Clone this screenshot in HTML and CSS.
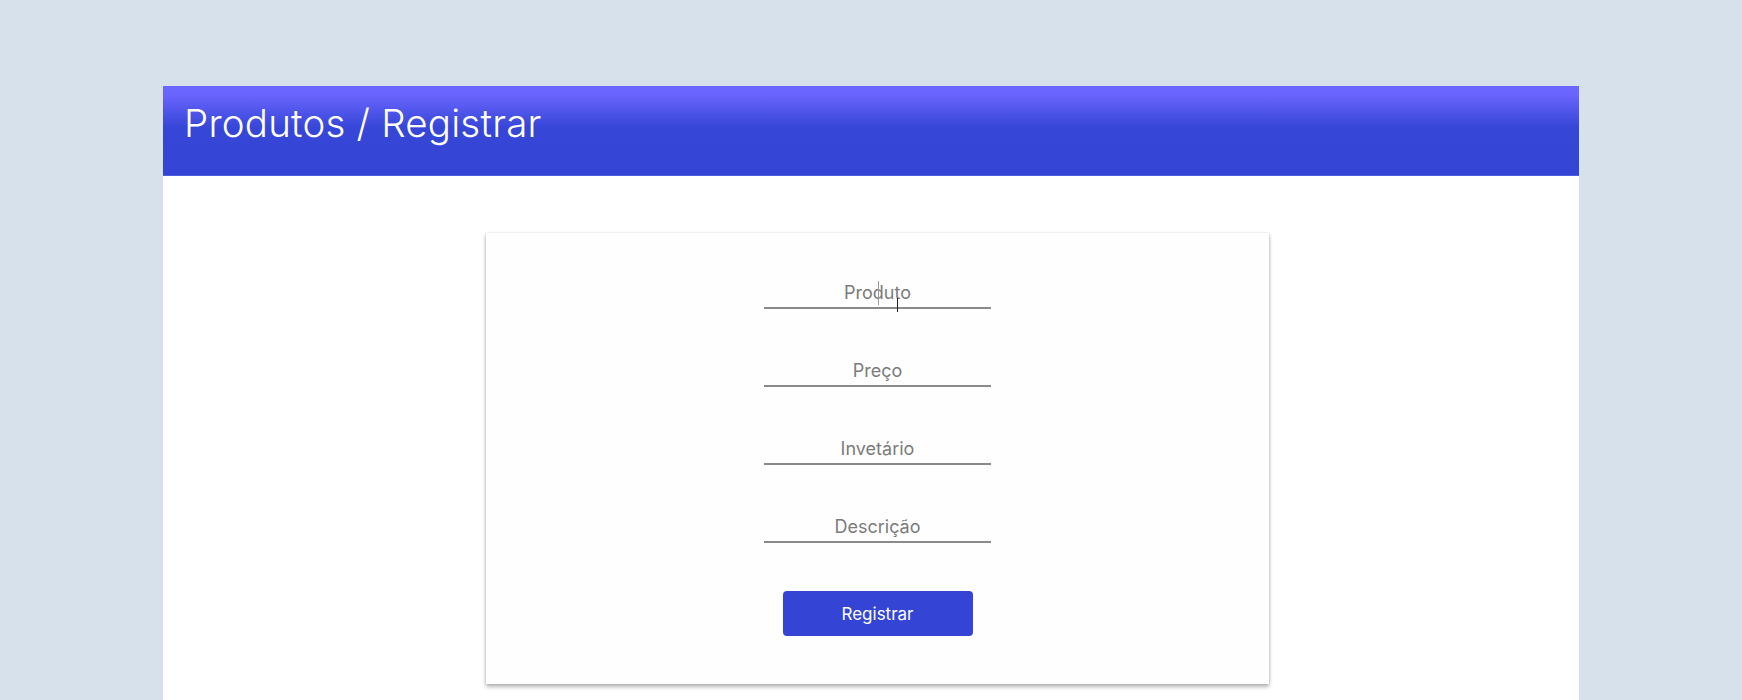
FILE: index.html
```html
<!DOCTYPE html>
<html lang="pt">
<head>
<meta charset="utf-8">
<title>Produtos / Registrar</title>
<link rel="stylesheet" href="styles.css">
</head>
<body>
<main class="panel">
  <header class="panel-header">
    <h1 class="title">Produtos / Registrar</h1>
  </header>
  <section class="panel-body">
    <form class="card">
      <div class="field">
        <input class="input" type="text" placeholder="Produto">
        <span class="caret"></span>
        <span class="ibeam"></span>
      </div>
      <div class="field"><input class="input" type="text" placeholder="Preço"></div>
      <div class="field"><input class="input" type="text" placeholder="Invetário"></div>
      <div class="field"><input class="input" type="text" placeholder="Descrição"></div>
      <button class="btn" type="button">Registrar</button>
    </form>
  </section>
</main>
</body>
</html>
```

FILE: styles.css
```css
* { box-sizing: border-box; }
html, body { margin: 0; padding: 0; height: 100%; }
body {
  background: #d7e1ec;
  font-family: Inter, "Noto Sans", sans-serif;
  overflow: hidden;
}
.panel {
  margin: 86px 0 0 163px;
  width: 1416px;
  min-height: 614px;
  background: #ffffff;
  display: flex;
  flex-direction: column;
}
.panel-header {
  height: 90px;
  background: linear-gradient(to bottom, #6b66ff 0px, #6a65fe 8px, #3646d7 42px, #3445d6 100%);
  border-bottom: 1px solid #4c5ce0;
  padding: 14px 0 0 21px;
}
.title {
  margin: 0;
  font-size: 38.5px;
  line-height: 46px;
  font-weight: 300;
  color: #ffffff;
  letter-spacing: 0.2px;
}
.panel-body {
  padding: 57px 0 0 323px;
}
.card {
  width: 783px;
  background: #fefefe;
  box-shadow: 0 3px 4px rgba(0,0,0,0.28), -1px 0 2px rgba(0,0,0,0.08), 1px 0 2px rgba(0,0,0,0.08);
  padding: 46px 0 48px 0;
  display: flex;
  flex-direction: column;
  align-items: center;
  gap: 48px;
}
.field {
  position: relative;
  width: 227px;
}
.input {
  display: block;
  width: 227px;
  height: 30px;
  border: 0;
  border-bottom: 2px solid #8a8a8a;
  background: transparent;
  font-family: Inter, "Noto Sans", sans-serif;
  font-size: 18px;
  font-weight: 400;
  text-align: center;
  color: #555;
  padding: 0 0 2px 0;
  outline: none;
}
.input::placeholder { color: #7b7b7b; }
.caret {
  position: absolute;
  left: 114px;
  top: 2px;
  width: 1px;
  height: 24px;
  background: #9a9a9a;
}
.ibeam {
  position: absolute;
  left: 133px;
  top: 19px;
  width: 1px;
  height: 14px;
  background: #222;
}
.btn {
  width: 190px;
  height: 45px;
  border: 0;
  border-radius: 4px;
  background: #3445d6;
  color: #ffffff;
  font-family: Inter, "Noto Sans", sans-serif;
  font-size: 17px;
  font-weight: 400;
  cursor: pointer;
}
```
